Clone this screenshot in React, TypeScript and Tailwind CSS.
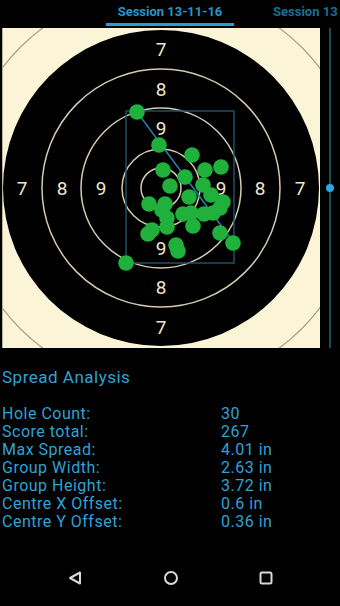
const holes = [
  [137, 112], [159, 145], [192, 155], [163, 170], [205, 170], [221, 167],
  [185, 177], [170, 186], [203, 185], [211, 195], [189, 197], [223, 202],
  [149, 204], [162, 210], [183, 214], [191, 213], [204, 214], [213, 213],
  [220, 208], [167, 218], [152, 230], [167, 227], [193, 226], [220, 233],
  [233, 243], [176, 245], [178, 251], [126, 263], [148, 234], [165, 204],
];

const stats = [
  { label: "Hole Count:", value: "30" },
  { label: "Score total:", value: "267" },
  { label: "Max Spread:", value: "4.01 in" },
  { label: "Group Width:", value: "2.63 in" },
  { label: "Group Height:", value: "3.72 in" },
  { label: "Centre X Offset:", value: "0.6 in" },
  { label: "Centre Y Offset:", value: "0.36 in" },
];

// ring number labels, page coords
const cx = 161;
const cy = 188;
const labels = [
  { d: 139, n: "7" },
  { d: 99, n: "8" },
  { d: 60, n: "9" },
];

function Target() {
  return (
    <svg width={318} height={320} viewBox="0 0 318 320" className="block">
      <rect x={0} y={0} width={318} height={320} fill="#fcf4d6" />
      <line x1={0.5} y1={0} x2={0.5} y2={320} stroke="#b8b09a" strokeWidth={1} />
      <g transform="translate(-2,-28)">
        <circle cx={cx} cy={cy} r={199} fill="none" stroke="#a8a18f" strokeWidth={1.2} />
        <circle cx={cx} cy={cy} r={158} fill="#000" />
        {[119, 80, 39, 20].map((r) => (
          <circle key={r} cx={cx} cy={cy} r={r} fill="none" stroke="#d4cab0" strokeWidth={1.5} />
        ))}
        {labels.map((l) => (
          <g
            key={l.n}
            fill="#efe6cc"
            fontSize={19}
            fontFamily="Roboto, sans-serif"
            textAnchor="middle"
            dominantBaseline="central"
          >
            <text x={cx} y={cy - l.d}>{l.n}</text>
            <text x={cx} y={cy + l.d}>{l.n}</text>
            <text x={cx - l.d} y={cy}>{l.n}</text>
            <text x={cx + l.d} y={cy}>{l.n}</text>
          </g>
        ))}
        <rect x={126} y={111} width={108} height={152} fill="none" stroke="#1d4f66" strokeWidth={1.5} />
        <line x1={137} y1={112} x2={234} y2={243} stroke="#2680ad" strokeWidth={1.5} />
        {holes.map(([x, y], i) => (
          <circle key={i} cx={x} cy={y} r={7.8} fill="#1fb13b" />
        ))}
      </g>
    </svg>
  );
}

export default function App() {
  return (
    <div className="flex h-[606px] w-[340px] flex-col overflow-hidden bg-black font-['Roboto',sans-serif]">
      {/* tabs */}
      <div className="flex h-[28px] items-stretch overflow-hidden whitespace-nowrap pl-[106px]">
        <div className="flex w-[128px] shrink-0 flex-col">
          <div className="flex flex-1 items-center justify-center text-[13px] font-bold text-[#2b93c6]">
            Session 13-11-16
          </div>
          <div className="mb-[2px] h-[3px] bg-[#2a9fd4]" />
        </div>
        <div className="ml-[39px] flex shrink-0 items-center pb-[5px] text-[13px] font-bold text-[#1a6f96]">Session 13</div>
      </div>

      {/* target + slider */}
      <div className="flex h-[320px]">
        <div className="pl-[2px]">
          <Target />
        </div>
        <div className="relative flex-1">
          <div className="absolute left-[9px] top-0 h-[320px] w-[2px] bg-[#1b4a60]" />
          <div className="absolute left-[6px] top-[156px] h-[8px] w-[8px] rounded-full bg-[#2ea6de]" />
        </div>
      </div>

      {/* spread analysis */}
      <div className="mt-[20px] pl-[2px] text-[16px] leading-[18px] tracking-[0.5px] text-[#2ea3d6]">
        <p className="text-[17px]">Spread Analysis</p>
        <div className="mt-[19px]">
          {stats.map((s) => (
            <div key={s.label} className="flex">
              <span className="w-[219px]">{s.label}</span>
              <span>{s.value}</span>
            </div>
          ))}
        </div>
      </div>

      {/* nav bar */}
      <div className="mt-auto flex h-[38px] items-start justify-between pl-[67px] pr-[66px] pt-[2px]">
        <svg width={16} height={16} viewBox="0 0 16 16">
          <path d="M13 2.5 L13 13.5 L3 8 Z" fill="none" stroke="#d8d8d8" strokeWidth={2} strokeLinejoin="round" />
        </svg>
        <svg width={16} height={16} viewBox="0 0 16 16">
          <circle cx={8} cy={8} r={6} fill="none" stroke="#d8d8d8" strokeWidth={2} />
        </svg>
        <svg width={16} height={16} viewBox="0 0 16 16">
          <rect x={2.5} y={2.5} width={11} height={11} rx={1.5} fill="none" stroke="#d8d8d8" strokeWidth={2} />
        </svg>
      </div>
    </div>
  );
}
